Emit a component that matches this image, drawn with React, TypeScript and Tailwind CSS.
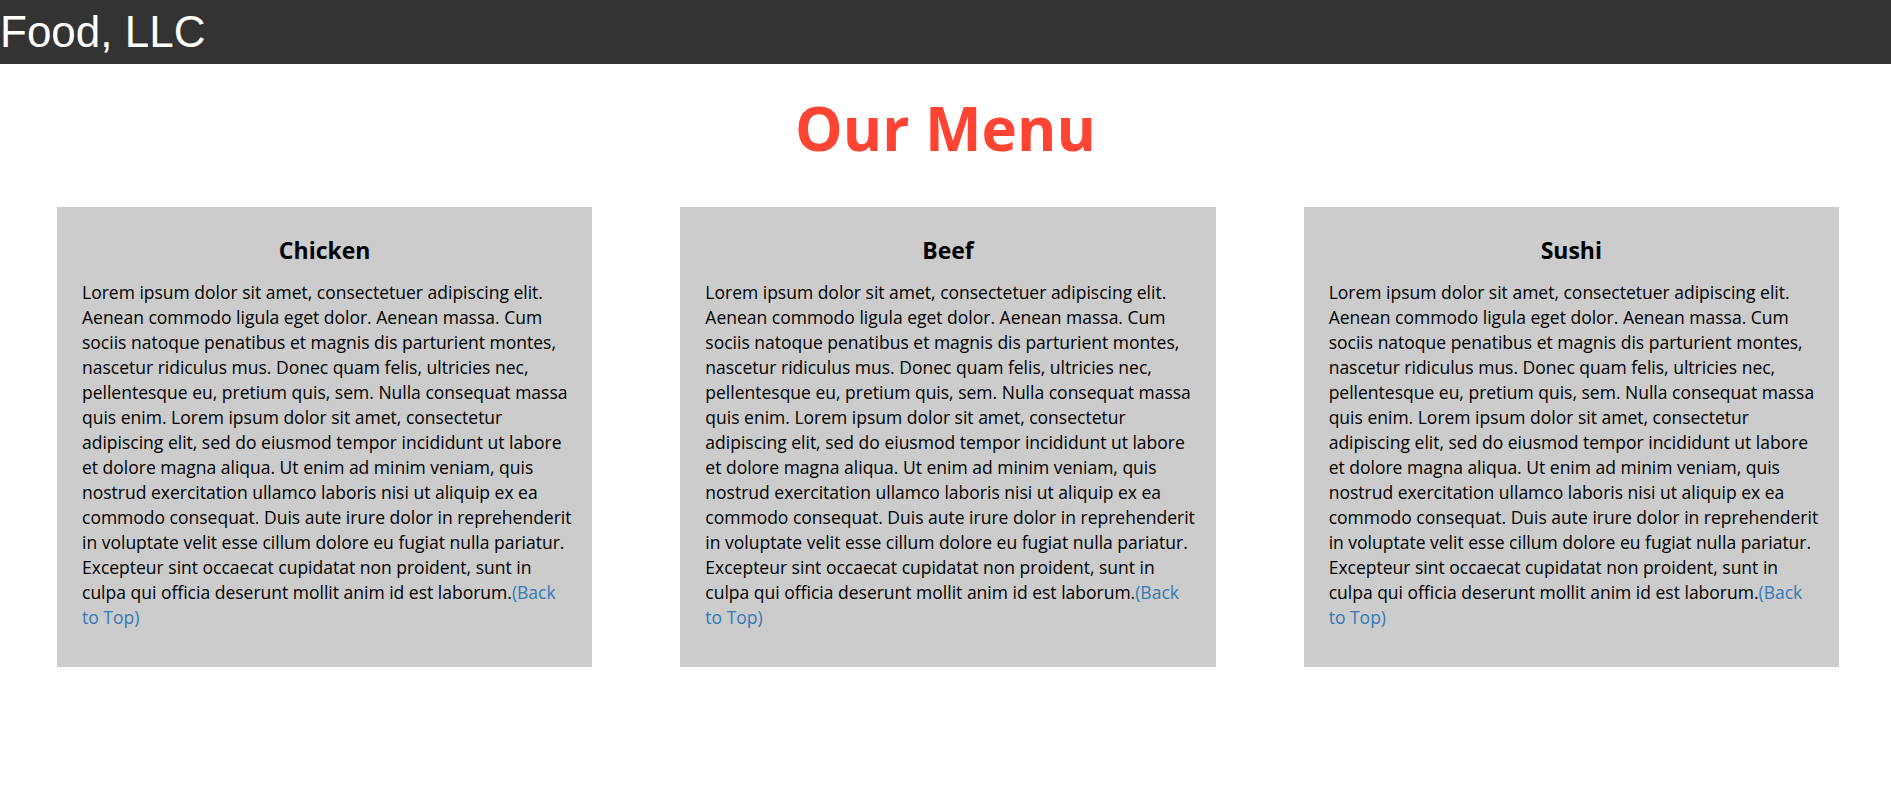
const lines = [
  "Lorem ipsum dolor sit amet, consectetuer adipiscing elit.",
  "Aenean commodo ligula eget dolor. Aenean massa. Cum",
  "sociis natoque penatibus et magnis dis parturient montes,",
  "nascetur ridiculus mus. Donec quam felis, ultricies nec,",
  "pellentesque eu, pretium quis, sem. Nulla consequat massa",
  "quis enim. Lorem ipsum dolor sit amet, consectetur",
  "adipiscing elit, sed do eiusmod tempor incididunt ut labore",
  "et dolore magna aliqua. Ut enim ad minim veniam, quis",
  "nostrud exercitation ullamco laboris nisi ut aliquip ex ea",
  "commodo consequat. Duis aute irure dolor in reprehenderit",
  "in voluptate velit esse cillum dolore eu fugiat nulla pariatur.",
  "Excepteur sint occaecat cupidatat non proident, sunt in",
  "culpa qui officia deserunt mollit anim id est laborum.",
];

const dishes = ["Chicken", "Beef", "Sushi"];

function MenuCard({ title }: { title: string }) {
  return (
    <section className="bg-[#cccccc] px-[25px] pt-[27px] pb-[37px]">
      <h2 className="text-center text-[23px] font-bold leading-[33px] mb-[13px] text-black">
        {title}
      </h2>
      <p className="text-[17.5px] leading-[25px] text-black whitespace-nowrap">
        {lines.map((line, i) => (
          <span key={i}>
            {line}
            {i < lines.length - 1 && <br />}
          </span>
        ))}
        <a href="#top" className="text-[#337ab7]">
          (Back
          <br />
          to Top)
        </a>
      </p>
    </section>
  );
}

export default function App() {
  return (
    <div id="top" className="min-h-screen bg-white font-['Open_Sans',sans-serif]">
      <header className="h-16 flex items-center bg-[#333333]">
        <span className="text-white text-[44px] font-['Liberation_Sans',Arial,sans-serif] leading-normal">
          Food, LLC
        </span>
      </header>

      <h1 className="mt-[20px] mb-[34px] text-center text-[60px] font-bold leading-[89px] text-[#ff4433]">
        Our Menu
      </h1>

      <main className="grid grid-cols-3 gap-[88px] pl-[57px] pr-[52px]">
        {dishes.map((d) => (
          <MenuCard key={d} title={d} />
        ))}
      </main>
    </div>
  );
}
